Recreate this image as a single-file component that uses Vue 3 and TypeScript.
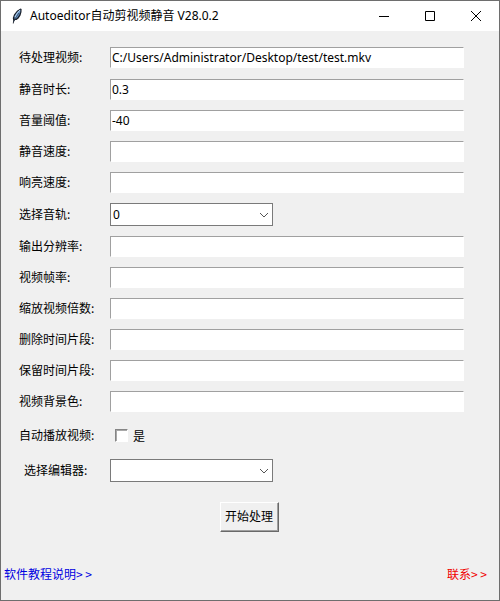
<script setup lang="ts">
import { reactive } from 'vue'

type Kind = 'text' | 'select' | 'check'

interface Field {
  id: string
  label: string
  kind: Kind
  value: string | boolean
  options?: string[]
}

const fields = reactive<Field[]>([
  { id: 'source', label: '待处理视频:', kind: 'text', value: 'C:/Users/Administrator/Desktop/test/test.mkv' },
  { id: 'silent-duration', label: '静音时长:', kind: 'text', value: '0.3' },
  { id: 'threshold', label: '音量阈值:', kind: 'text', value: '-40' },
  { id: 'silent-speed', label: '静音速度:', kind: 'text', value: '' },
  { id: 'loud-speed', label: '响亮速度:', kind: 'text', value: '' },
  { id: 'track', label: '选择音轨:', kind: 'select', value: '0', options: ['0'] },
  { id: 'resolution', label: '输出分辨率:', kind: 'text', value: '' },
  { id: 'frame-rate', label: '视频帧率:', kind: 'text', value: '' },
  { id: 'scale', label: '缩放视频倍数:', kind: 'text', value: '' },
  { id: 'cut', label: '删除时间片段:', kind: 'text', value: '' },
  { id: 'keep', label: '保留时间片段:', kind: 'text', value: '' },
  { id: 'background', label: '视频背景色:', kind: 'text', value: '' },
  { id: 'autoplay', label: '自动播放视频:', kind: 'check', value: false },
  { id: 'editor', label: '选择编辑器:', kind: 'select', value: '', options: [''] },
])
</script>

<template>
  <main class="window">
    <header class="titlebar">
      <svg class="feather" width="16" height="16" viewBox="0 0 16 16" aria-hidden="true">
        <path d="M11.5 0.5L12.6 1L12.5 4L11.5 7.5L9.5 10.5L7.5 12L6 12L5 13.5L4.6 15.5L3.8 15.5L4.2 12.5L3.8 10L5 6.5L8 2.8Z" fill="#1a1f29" />
        <path d="M11.4 1.5L11.3 4L10.2 7L8 10L6.2 11L5.3 10.5L5.6 8L8.5 3.8Z" fill="#6793c4" />
        <path d="M11 2L8 5.5L6 9" fill="none" stroke="#b5d2ec" />
        <path d="M10 5L7.5 8.5L4.4 14" fill="none" stroke="#27384f" stroke-width="0.7" />
      </svg>
      <h1 class="title">Autoeditor自动剪视频静音 V28.0.2</h1>
      <button class="caption" type="button" aria-label="最小化">
        <svg width="12" height="12" viewBox="0 0 12 12"><path d="M1 6.5H11" /></svg>
      </button>
      <button class="caption" type="button" aria-label="最大化">
        <svg width="12" height="12" viewBox="0 0 12 12"><path d="M1.5 1.5H10.5V10.5H1.5Z" /></svg>
      </button>
      <button class="caption" type="button" aria-label="关闭">
        <svg width="12" height="12" viewBox="0 0 12 12"><path d="M1 1L11 11M11 1L1 11" /></svg>
      </button>
    </header>

    <form class="form" @submit.prevent>
      <div v-for="f in fields" :key="f.id" class="row" :class="[f.kind, f.id]">
        <label class="label" :for="f.id">{{ f.label }}</label>
        <input v-if="f.kind === 'text'" :id="f.id" v-model="f.value" class="entry" type="text" spellcheck="false" />
        <div v-else-if="f.kind === 'select'" class="combo">
          <select :id="f.id" v-model="f.value">
            <option v-for="o in f.options" :key="o" :value="o">{{ o }}</option>
          </select>
          <svg class="chevron" width="10" height="6" viewBox="0 0 10 6" aria-hidden="true">
            <path d="M1 1L5 5L9 1" />
          </svg>
        </div>
        <div v-else class="choice">
          <input :id="f.id" v-model="f.value" class="box" type="checkbox" />
          <label :for="f.id">是</label>
        </div>
      </div>
      <button class="start" type="submit">开始处理</button>
    </form>

    <footer class="links">
      <a class="guide" href="#guide">软件教程说明&gt; &gt;</a>
      <a class="contact" href="#contact">联系&gt; &gt;</a>
    </footer>
  </main>
</template>

<style>
body {
  margin: 0;
}
</style>

<style scoped>
.window {
  box-sizing: border-box;
  min-height: 100vh;
  display: flex;
  flex-direction: column;
  border: 1px solid #6e6e6e;
  background: #f0f0f0;
  color: #000;
  font: 12px/16px "Noto Sans CJK SC", sans-serif;
}

.titlebar {
  display: flex;
  align-items: center;
  height: 30px;
  padding-left: 8px;
  background: #fff;
}

.feather {
  margin-right: 5px;
}

.title {
  flex: 1;
  margin: 0;
  font: 12px/16px "Noto Sans", "Noto Sans CJK SC", sans-serif;
}

.caption {
  display: grid;
  place-items: center;
  width: 46px;
  height: 30px;
  padding: 0;
  border: 0;
  background: none;
}

.caption path {
  fill: none;
  stroke: #000;
}

.form {
  display: flex;
  flex-direction: column;
  padding: 11px 35px 0 18px;
}

.row {
  display: grid;
  grid-template-columns: 91px 1fr;
  align-items: center;
  height: 31px;
}

.row.source {
  margin-bottom: 1px;
}

.row.select {
  height: 33px;
}

.row.check {
  height: 37px;
}

.label {
  padding-bottom: 2px;
}

.row.editor .label {
  padding-left: 5px;
}

.entry {
  box-sizing: border-box;
  width: 100%;
  height: 21px;
  padding: 0 1px;
  border: 1px solid;
  border-color: #a0a0a0 #fff #fff #a0a0a0;
  border-radius: 0;
  outline: 0;
  background: #fff;
  color: #000;
  font: 12px/16px "Noto Sans", "Noto Sans CJK SC", sans-serif;
}

.combo {
  position: relative;
  width: 163px;
  height: 23px;
}

.combo select {
  box-sizing: border-box;
  display: block;
  width: 100%;
  height: 100%;
  padding: 0 20px 0 2px;
  border: 1px solid #7a7a7a;
  border-radius: 0;
  appearance: none;
  background: #fff;
  color: #000;
  font: 12px/16px "Noto Sans", "Noto Sans CJK SC", sans-serif;
}

.chevron {
  position: absolute;
  top: 9px;
  right: 4px;
  pointer-events: none;
}

.chevron path {
  fill: none;
  stroke: #555;
}

.choice {
  display: flex;
  align-items: center;
  gap: 5px;
  padding-left: 5px;
}

.box {
  box-sizing: border-box;
  width: 13px;
  height: 13px;
  margin: 0;
  border: 1px solid;
  border-color: #858585 #fff #fff #858585;
  appearance: none;
  background: #fff;
  box-shadow: inset 1px 1px #a8a8a8;
}

.box:checked {
  background: #333;
}

.start {
  align-self: flex-start;
  box-sizing: border-box;
  height: 30px;
  margin: 15px 0 0 201px;
  padding: 0 5px 2px 4px;
  border: 1px solid;
  border-color: #fff #696969 #696969 #fff;
  background: #f0f0f0;
  box-shadow: inset -1px -1px #a0a0a0;
  color: #000;
  font: inherit;
}

.links {
  display: flex;
  justify-content: space-between;
  margin-top: auto;
  padding: 0 12px 18px 3px;
}

.links a {
  text-decoration: none;
}

.guide {
  color: #0000e0;
}

.contact {
  color: #f00000;
}
</style>
